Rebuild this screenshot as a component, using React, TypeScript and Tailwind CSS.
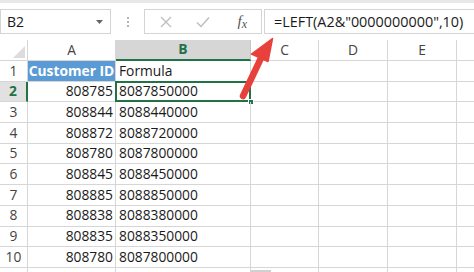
import { FC } from 'react'

const rows: [string, string][] = [
  ['808785', '8087850000'],
  ['808844', '8088440000'],
  ['808872', '8088720000'],
  ['808780', '8087800000'],
  ['808845', '8088450000'],
  ['808885', '8088850000'],
  ['808838', '8088380000'],
  ['808835', '8088350000'],
  ['808780', '8087800000'],
]

const font = { fontFamily: '"Open Sans", "Noto Sans", sans-serif' }

const cell = 'border-r border-b border-[#d6d6d6] h-[20.7px] flex items-center'

const App: FC = () => {
  return (
    <div
      className="relative w-[474px] h-[272px] overflow-hidden bg-white text-[13.8px] text-[#1a1a1a]"
      style={font}
    >
      <div className="h-[3px] bg-[#e8e8e8]" />

      {/* name box + formula bar */}
      <div className="flex items-start h-[37px] pt-[6px]">
        <div className="w-[111px] h-[25px] border border-[#d4d4d4] flex items-center justify-between pl-[6px] pr-[7px] text-[14px]">
          <span>B2</span>
          <svg width="7" height="4" viewBox="0 0 7 4">
            <path d="M0 0h7L3.5 4z" fill="#666" />
          </svg>
        </div>
        <div className="w-[33px] h-[25px] flex flex-col items-center justify-center gap-[2px]">
          <span className="w-[2px] h-[2px] bg-[#b5b5b5]" />
          <span className="w-[2px] h-[2px] bg-[#b5b5b5]" />
          <span className="w-[2px] h-[2px] bg-[#b5b5b5]" />
        </div>
        <div className="w-[118px] h-[25px] border border-[#d4d4d4] flex items-center pl-[14px] pr-[14px]">
          <svg width="14" height="14" viewBox="0 0 14 14">
            <path d="M2 2l10 10M12 2L2 12" stroke="#bdbdbd" strokeWidth="1.3" fill="none" />
          </svg>
          <svg width="14" height="12" viewBox="0 0 14 12" className="ml-[23px]">
            <path d="M1 6.5l4 4L13 1.5" stroke="#bdbdbd" strokeWidth="1.4" fill="none" />
          </svg>
          <span
            className="ml-auto italic text-[#555] text-[15px] leading-none"
            style={{ fontFamily: '"Liberation Serif", serif' }}
          >
            f<span className="text-[12px] relative top-[2px]">x</span>
          </span>
        </div>
        <div className="w-[2px]" />
        <div className="flex-1 h-[25px] border border-r-0 border-[#d4d4d4] flex items-center pl-[9px] text-[14.4px]">
          =LEFT(A2&amp;"0000000000",10)
        </div>
      </div>

      {/* sheet */}
      <div className="grid grid-cols-[28px_88px_135px_68px_69px_69px_1fr]">
        <div className="h-[21px] border-r border-b border-[#d6d6d6] flex items-end justify-end pr-[2px] pb-[2px]">
          <svg width="12" height="12" viewBox="0 0 12 12">
            <path d="M12 0v12H0z" fill="#dcdcdc" />
          </svg>
        </div>
        <div className="h-[21px] border-r border-b border-[#d6d6d6] flex items-center justify-center text-[#444]">A</div>
        <div className="h-[21px] bg-[#d6d6d6] border-r border-[#c6c6c6] border-b-2 border-b-[#217346] flex items-center justify-center font-bold text-[#217346]">B</div>
        <div className="h-[21px] border-r border-b border-[#d6d6d6] flex items-center justify-center text-[#444]">C</div>
        <div className="h-[21px] border-r border-b border-[#d6d6d6] flex items-center justify-center text-[#444]">D</div>
        <div className="h-[21px] border-r border-b border-[#d6d6d6] flex items-center justify-center text-[#444]">E</div>
        <div className="h-[21px] border-b border-[#d6d6d6]" />

        {/* row 1 */}
        <div className={`${cell} justify-center text-[#444]`}>1</div>
        <div className={`${cell} bg-[#5b9bd5] text-white font-bold justify-center px-[2px] whitespace-nowrap`}>Customer ID</div>
        <div className={`${cell} px-[3px]`}>Formula</div>
        <div className={cell} />
        <div className={cell} />
        <div className={cell} />
        <div className="border-b border-[#d6d6d6] h-[20.7px]" />

        {rows.map(([a, b], i) => {
          const sel = i === 0
          return [
            <div
              key={`n${i}`}
              className={
                sel
                  ? 'h-[20.7px] flex items-center justify-center bg-[#e1e1e1] border-r-2 border-r-[#217346] border-b border-[#d6d6d6] font-bold text-[#217346]'
                  : `${cell} justify-center text-[#444]`
              }
            >
              {i + 2}
            </div>,
            <div key={`a${i}`} className={`${cell} justify-end pr-[2px]`}>
              {a}
            </div>,
            <div key={`b${i}`} className={`${cell} px-[3px] relative`}>
              {b}
              {sel && (
                <>
                  <div className="absolute -left-[1px] -top-[1px] right-[-1px] bottom-[-1px] border-2 border-[#217346]" />
                  <div className="absolute right-[-4px] bottom-[-4px] w-[6px] h-[6px] bg-[#217346] border border-white" />
                </>
              )}
            </div>,
            <div key={`c${i}`} className={cell} />,
            <div key={`d${i}`} className={cell} />,
            <div key={`e${i}`} className={cell} />,
            <div key={`f${i}`} className="border-b border-[#d6d6d6] h-[20.7px]" />,
          ]
        })}

        <div className="h-[4px] border-r border-[#d6d6d6]" />
        <div className="h-[4px] border-r border-[#d6d6d6]" />
        <div className="h-[4px] border-r border-[#d6d6d6]" />
        <div className="h-[4px] border-r border-[#d6d6d6] flex justify-start">
          <div className="w-[20px] h-[4px] bg-[#d0d0d0] mt-[2px]" />
        </div>
        <div className="h-[4px] border-r border-[#d6d6d6]" />
        <div className="h-[4px] border-r border-[#d6d6d6]" />
        <div className="h-[4px]" />
      </div>

      {/* annotation arrow */}
      <svg className="absolute left-0 top-0 pointer-events-none" width="474" height="272">
        <line x1="243" y1="96" x2="262" y2="56" stroke="#e8413c" strokeWidth="6.5" strokeLinecap="round" />
        <path d="M272.5 38.5L251.5 54L268 61.5z" fill="#e8413c" stroke="#e8413c" strokeWidth="1.5" strokeLinejoin="round" />
      </svg>
    </div>
  )
}

export default App
